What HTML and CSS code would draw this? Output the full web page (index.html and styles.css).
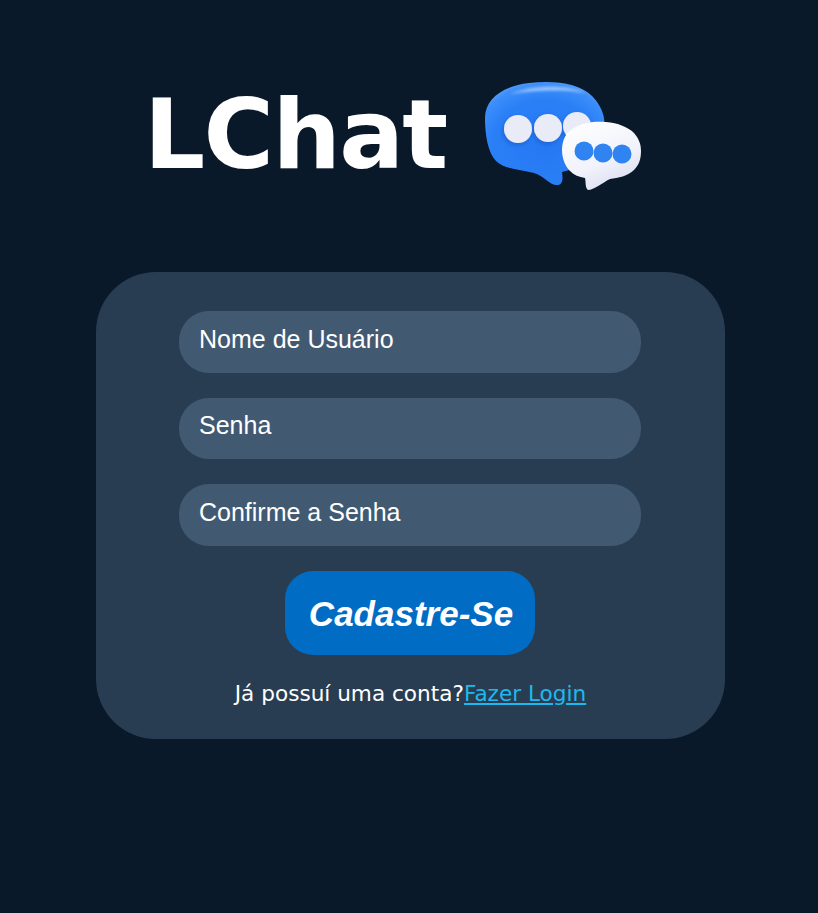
FILE: index.html
```html
<!DOCTYPE html>
<html lang="pt-BR">
<head>
<meta charset="utf-8">
<title>LChat</title>
<link rel="stylesheet" href="styles.css">
</head>
<body>
<header class="brand">
  <h1 class="brand-name">LChat</h1>
  <svg class="brand-icon" width="160" height="112" viewBox="0 0 160 112" aria-hidden="true">
    <defs>
      <radialGradient id="blue" cx="0.5" cy="0.62" r="0.68">
        <stop offset="0" stop-color="#2678f2"/>
        <stop offset="0.65" stop-color="#2a7ff6"/>
        <stop offset="0.88" stop-color="#3c8efa"/>
        <stop offset="1" stop-color="#62a8ff"/>
      </radialGradient>
      <linearGradient id="white" x1="0.1" y1="0" x2="0.6" y2="1">
        <stop offset="0" stop-color="#ffffff"/>
        <stop offset="0.65" stop-color="#f1f2fb"/>
        <stop offset="1" stop-color="#dcdff2"/>
      </linearGradient>
      <filter id="soft" x="-30%" y="-100%" width="160%" height="300%">
        <feGaussianBlur stdDeviation="1.4"/>
      </filter>
      <filter id="shadow" x="-20%" y="-20%" width="140%" height="140%">
        <feDropShadow dx="-1" dy="2" stdDeviation="2" flood-color="#0f4fb8" flood-opacity="0.55"/>
      </filter>
    </defs>
    <path d="M1 38C1 18 20 6 45 3C70 0 95 3 108 16C118 26 122 38 120 50C118 70 100 88 78 92C79 98 79 104 74 105C66 106 62 97 50 93C36 89 22 90 12 81C4 73 1 55 1 38Z" fill="url(#blue)"/>
    <path d="M26 14C48 5 82 4 102 13C82 9 48 10 26 14Z" fill="#b7d6ff" opacity="0.8" filter="url(#soft)"/>
    <g filter="url(#shadow)">
      <circle cx="34" cy="49" r="14" fill="#e9ebf7"/>
      <circle cx="64" cy="48" r="14" fill="#e9ebf7"/>
      <circle cx="93" cy="46" r="14" fill="#e9ebf7"/>
    </g>
    <path d="M78 70C78 60 82 52 90 48C100 42 112 41 122 42C134 43 144 47 150 53C155 59 157 64 157 71C157 79 155 85 150 90C144 96 134 98 126 99C118 103 110 110 104 110C101 108 102 102 101 98C95 97 90 95 86 91C81 86 78 78 78 70Z" fill="url(#white)"/>
    <circle cx="100" cy="71" r="9.5" fill="#2f84f1"/>
    <circle cx="119" cy="73" r="9.5" fill="#2f84f1"/>
    <circle cx="138" cy="74" r="9.5" fill="#2f84f1"/>
  </svg>
</header>
<main class="card">
  <form class="form">
    <input class="field" type="text" placeholder="Nome de Usuário">
    <input class="field" type="password" placeholder="Senha">
    <input class="field" type="password" placeholder="Confirme a Senha">
    <button class="submit" type="button">Cadastre-Se</button>
  </form>
  <p class="login">Já possuí uma conta?<a class="login-link" href="#">Fazer Login</a></p>
</main>
</body>
</html>
```
FILE: styles.css
```css
* {
  box-sizing: border-box;
}

html,
body {
  margin: 0;
  height: 913px;
  overflow: hidden;
  background: #0a1929;
}

body {
  display: flex;
  flex-direction: column;
  padding-top: 76px;
}

.brand {
  display: flex;
  align-items: flex-start;
  height: 196px;
  padding-left: 144px;
  gap: 37px;
}

.brand-name {
  width: 303px;
  margin: 0;
  font-family: "DejaVu Sans", "Liberation Sans", sans-serif;
  font-size: 96px;
  font-weight: 700;
  line-height: 119px;
  letter-spacing: -1.6px;
  color: #fff;
}

.brand-icon {
  margin-top: 4px;
  flex: none;
}

.card {
  width: 629px;
  height: 467px;
  margin-left: 96px;
  padding-top: 39px;
  display: flex;
  flex-direction: column;
  align-items: center;
  border-radius: 60px;
  background: #293d52;
}

.form {
  display: flex;
  flex-direction: column;
  align-items: center;
  gap: 25px;
  margin-right: 1px;
}

.field {
  display: block;
  width: 462px;
  height: 61.5px;
  padding: 0 20px 5px;
  border: 0;
  outline: 0;
  border-radius: 30px;
  background: #415a72;
  font-family: "Liberation Sans", Arial, sans-serif;
  font-size: 25px;
  color: #fff;
}

.field::placeholder {
  color: #fff;
  opacity: 1;
}

.submit {
  width: 250px;
  height: 84px;
  padding: 3px 0 0 2px;
  border: 0;
  border-radius: 28px;
  background: #006cc4;
  font-family: "Liberation Sans", Arial, sans-serif;
  font-size: 35px;
  font-style: italic;
  font-weight: 700;
  color: #fff;
}

.login {
  margin: 25px 0 0;
  font-family: "DejaVu Sans", "Liberation Sans", sans-serif;
  font-size: 21.6px;
  line-height: 28px;
  color: #fff;
}

.login-link {
  color: #1cb9f0;
  text-decoration: underline;
}
```
